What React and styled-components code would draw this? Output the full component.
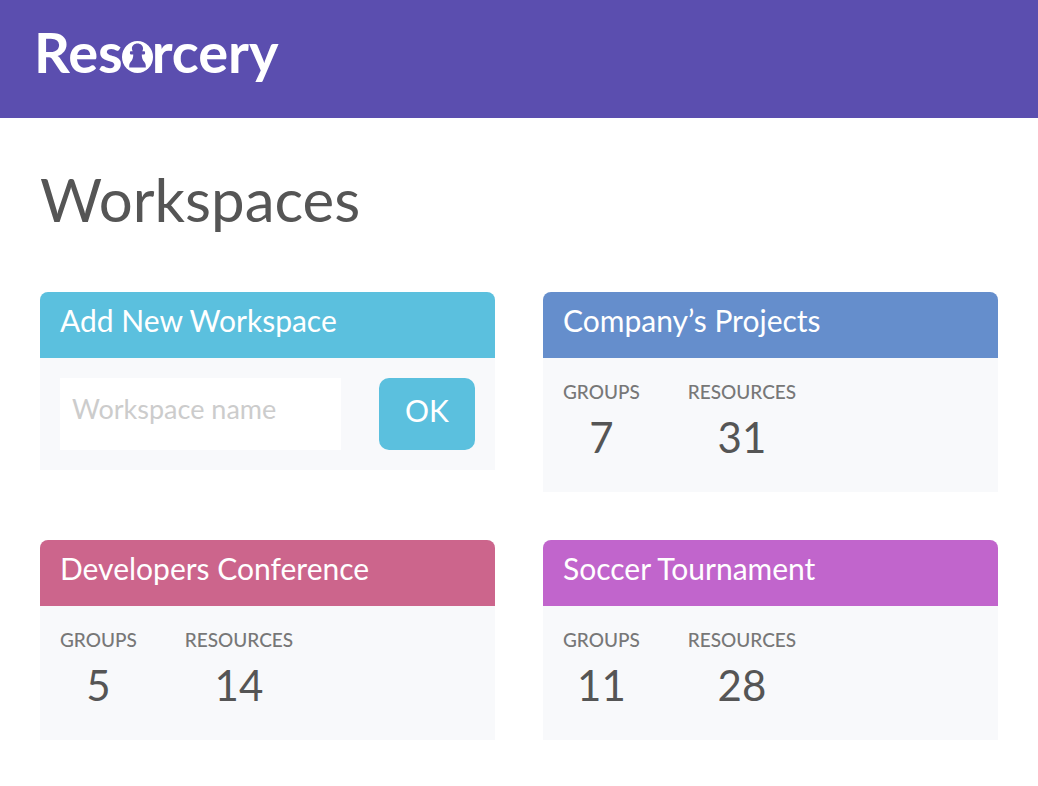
import React from "react";
import styled, { createGlobalStyle } from "styled-components";

const GlobalStyle = createGlobalStyle`
  *, *::before, *::after { box-sizing: border-box; }
  body {
    margin: 0;
    background: #fff;
    color: #555;
    font-family: Lato, "Open Sans", sans-serif;
    font-weight: 400;
  }
`;

const TopBar = styled.header`
  display: flex;
  align-items: flex-start;
  height: 118px;
  padding: 16px 34px;
  background: #5b4eaf;
`;

const Brand = styled.a`
  display: flex;
  align-items: baseline;
  color: #fff;
  font-size: 56px;
  font-weight: 700;
  line-height: 72px;
  text-decoration: none;
`;

const BrandMark = styled.svg`
  width: 31px;
  height: 32px;
  margin: 0 -1px;
`;

const Main = styled.main`
  padding: 44px 40px 48px;
`;

const PageTitle = styled.h1`
  margin: 0 0 56px;
  font-size: 60px;
  font-weight: 400;
  line-height: 74px;
`;

const CardGrid = styled.div`
  display: grid;
  grid-template-columns: repeat(2, minmax(0, 1fr));
  align-items: start;
  gap: 48px;
`;

const Card = styled.section`
  border-radius: 8px 8px 0 0;
  overflow: hidden;
  background: #f8f9fb;
`;

const CardTitle = styled.h2`
  margin: 0;
  padding: 6px 20px 16px;
  background: ${({ $color }) => $color};
  color: #fff;
  font-size: 30px;
  font-weight: 400;
  line-height: 44px;
`;

const AddForm = styled.form`
  display: flex;
  gap: 38px;
  padding: 20px;
`;

const NameInput = styled.input`
  flex: 1;
  min-width: 0;
  height: 72px;
  padding: 0 12px 12px;
  border: 0;
  background: #fff;
  color: #555;
  font: inherit;
  font-size: 27px;
  &::placeholder { color: #ccc; opacity: 1; }
`;

const OkButton = styled.button`
  width: 96px;
  height: 72px;
  padding: 0 0 8px;
  border: 0;
  border-radius: 10px;
  background: #5bc0de;
  color: #fff;
  font: inherit;
  font-size: 30px;
`;

const Stats = styled.dl`
  display: flex;
  gap: 48px;
  margin: 0;
  padding: 20px 20px 24px;
`;

const Stat = styled.div`
  text-align: center;
`;

const StatLabel = styled.dt`
  color: #777;
  font-size: 19px;
  font-weight: 500;
  line-height: 28px;
`;

const StatValue = styled.dd`
  margin: 0;
  font-size: 42px;
  line-height: 62px;
`;

const workspaces = [
  { name: "Company’s Projects", color: "#658ecc", groups: 7, resources: 31 },
  { name: "Developers Conference", color: "#cc658c", groups: 5, resources: 14 },
  { name: "Soccer Tournament", color: "#c165cc", groups: 11, resources: 28 },
];

function PawnMark() {
  return (
    <BrandMark viewBox="0 0 30 32" preserveAspectRatio="none" aria-hidden="true">
      <ellipse cx="15" cy="16" rx="15" ry="16" fill="#fff" />
      <path
        fill="#5b4eaf"
        d="M15 2.500c-3.200 0-5.400 2.200-5.400 5 0 1 .3 1.900.8 2.700H8.500c-.6 0-.8.300-.8.800v1.600c0 .5.200.8.800.8h2.400c0 3.400-.9 5.500-2.400 7.400-1 1.300-1.500 2.700-1.500 4.200v1.600h16V25c0-1.500-.5-2.900-1.500-4.200-1.500-1.900-2.400-4-2.400-7.400h2.400c.6 0 .8-.3.800-.8V11c0-.5-.2-.8-.8-.8h-1.900c.5-.8.800-1.700.8-2.700 0-2.800-2.200-5-5.400-5z"
      />
    </BrandMark>
  );
}

function WorkspaceCard({ name, color, groups, resources }) {
  return (
    <Card>
      <CardTitle $color={color}>{name}</CardTitle>
      <Stats>
        <Stat>
          <StatLabel>GROUPS</StatLabel>
          <StatValue>{groups}</StatValue>
        </Stat>
        <Stat>
          <StatLabel>RESOURCES</StatLabel>
          <StatValue>{resources}</StatValue>
        </Stat>
      </Stats>
    </Card>
  );
}

export default function App() {
  return (
    <>
      <GlobalStyle />
      <TopBar>
        <Brand href="#" aria-label="Resorcery">
          <span>Res</span>
          <PawnMark />
          <span>rcery</span>
        </Brand>
      </TopBar>
      <Main>
        <PageTitle>Workspaces</PageTitle>
        <CardGrid>
          <Card>
            <CardTitle $color="#5bc0de">Add New Workspace</CardTitle>
            <AddForm onSubmit={(event) => event.preventDefault()}>
              <NameInput aria-label="Workspace name" placeholder="Workspace name" />
              <OkButton type="submit">OK</OkButton>
            </AddForm>
          </Card>
          {workspaces.map((workspace) => (
            <WorkspaceCard key={workspace.name} {...workspace} />
          ))}
        </CardGrid>
      </Main>
    </>
  );
}
